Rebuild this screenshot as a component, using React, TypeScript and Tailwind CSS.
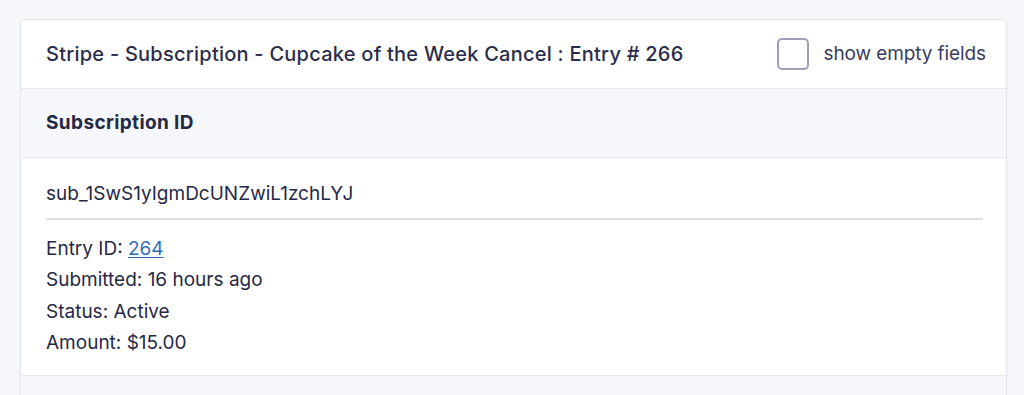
import React, {useState} from "react";

const details = [
  {label: "Submitted", value: "16 hours ago"},
  {label: "Status", value: "Active"},
  {label: "Amount", value: "$15.00"},
];

const App: React.FC = () => {
  const [showEmpty, setShowEmpty] = useState(false);

  return (
    <div
      className="min-h-[395px] bg-[#f6f7fb] pt-[19px] pl-[20px] pr-[17px] text-[#262946]"
      style={{fontFamily: "Inter, 'Noto Sans', sans-serif"}}
    >
      <div className="rounded-[4px] border border-[#e3e5ed] bg-white shadow-[0_1px_2px_rgba(30,34,80,0.06)]">
        {/* Header */}
        <div className="flex h-[69px] items-center justify-between border-b border-[#e6e8ef] pl-[25px] pr-[20px]">
          <h2 className="text-[20px] font-medium tracking-[0.012em] text-[#2a2d4b]">
            Stripe - Subscription - Cupcake of the Week Cancel : Entry # 266
          </h2>
          <label className="flex cursor-pointer items-center gap-[14px] text-[19px] tracking-[-0.005em] text-[#3a3d5c]">
            <input
              type="checkbox"
              checked={showEmpty}
              onChange={(e) => setShowEmpty(e.target.checked)}
              className="sr-only"
            />
            <span className="block h-[32px] w-[32px] rounded-[5px] border-2 border-[#9c9eb8] bg-white" />
            show empty fields
          </label>
        </div>

        {/* Field label */}
        <div className="flex h-[69px] items-center border-b border-[#e6e8ef] bg-[#f6f7fb] pl-[25px]">
          <span className="text-[19px] font-bold tracking-[0.02em]">Subscription ID</span>
        </div>

        {/* Field value */}
        <div className="pl-[25px] pr-[23px] pt-[22px] pb-[16px] text-[19px]">
          <div className="pb-[9px]">sub_1SwS1yIgmDcUNZwiL1zchLYJ</div>
          <div className="h-[2px] bg-[#dcdde2]" />
          <div className="pt-[13px] leading-[31.5px]">
            <div>
              Entry ID:{" "}
              <a href="#" className="text-[#2f6eb5] underline underline-offset-2">
                264
              </a>
            </div>
            {details.map((d) => (
              <div key={d.label}>
                {d.label}: {d.value}
              </div>
            ))}
          </div>
        </div>

        <div className="h-[30px] border-t border-[#e6e8ef] bg-[#f6f7fb]" />
      </div>
    </div>
  );
};

export default App;
